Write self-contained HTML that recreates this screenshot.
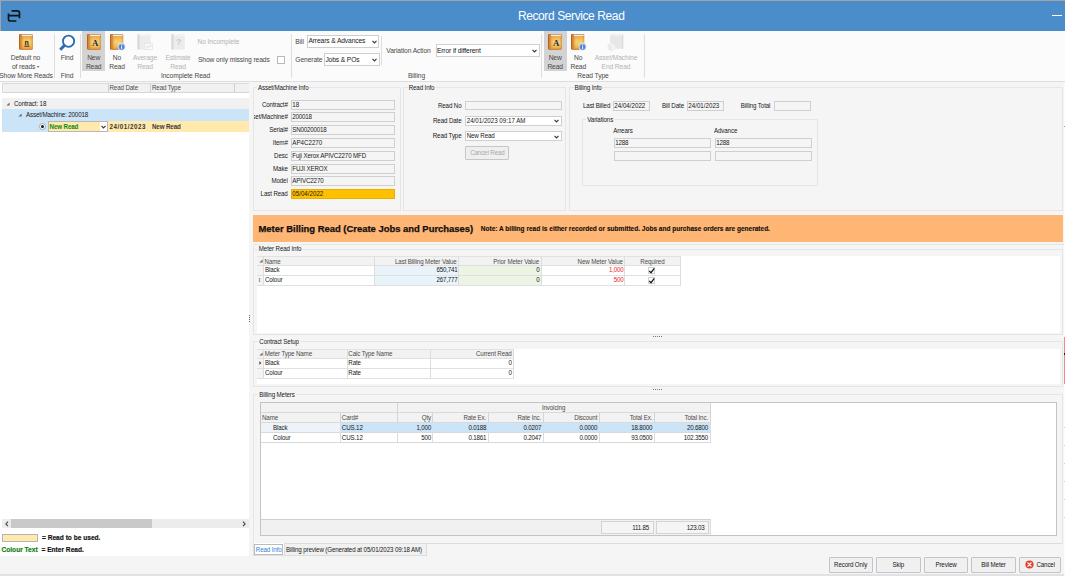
<!DOCTYPE html>
<html lang="en">
<head>
<meta charset="utf-8">
<title>Record Service Read</title>
<style>
*{box-sizing:border-box;margin:0;padding:0}
html,body{width:1065px;height:576px;overflow:hidden}
body{position:relative;letter-spacing:-0.12px;background:#f5f5f5;font-family:"Liberation Sans",sans-serif;font-size:6.2px;color:#181818}
.a{position:absolute}
.t{position:absolute;white-space:nowrap;line-height:8px;height:8px;font-size:6.2px;color:#181818}
.r{text-align:right}
.c{text-align:center}
.b{font-weight:bold}
.rb{letter-spacing:-0.1px;position:absolute;white-space:nowrap;line-height:8px;height:8px;font-size:6.7px;color:#484848}
.dis{color:#b4b4b4}
.sep{position:absolute;width:1px;background:#dedede}
.in{position:absolute;border:1px solid #cfcfcf;background:#f5f5f5;font-size:6.2px;line-height:7px;padding-left:0.3px;white-space:nowrap;overflow:hidden;color:#181818}
.dd{position:absolute;border:1px solid #cfcfcf;background:#fff;font-size:6.2px;line-height:8px;padding-left:0.4px;white-space:nowrap;overflow:hidden;color:#181818}
.grp{position:absolute;border:1px solid #e6e6e6}
.gl{position:absolute;white-space:nowrap;line-height:8px;height:8px;font-size:6.2px;color:#181818;background:#f5f5f5;padding:0 1px}
.n{letter-spacing:0}
.d{letter-spacing:-0.2px}
.t,.gt,.gl{transform:scaleY(1.12);transform-origin:50% 56%}
.sy{display:inline-block;transform:scaleY(1.12);transform-origin:50% 56%}
.gt{position:absolute;white-space:nowrap;line-height:8px;height:8px;font-size:6.2px;color:#181818}
.gh{color:#4a4a4a}
.btn{position:absolute;border-radius:1px;border:1px solid #c4c4c4;background:#f0f0f0;font-size:6.2px;line-height:13px;text-align:center;color:#181818;white-space:nowrap}
svg{position:absolute;overflow:visible}
</style>
</head>
<body>
<!-- window top edge + title bar -->
<div class="a" style="left:0;top:0;width:1065px;height:1px;background:#a3a3a3"></div>
<div class="a" style="left:0;top:1px;width:1065px;height:30px;background:#4b8dcb"></div>
<div class="a c" style="left:471.2px;top:7px;width:200px;height:18px;line-height:18px;font-size:12px;letter-spacing:-0.4px;color:#fff;white-space:nowrap">Record Service Read</div>
<svg style="left:0;top:0" width="30" height="30" viewBox="0 0 30 30"><path d="M11.6 10.9 H17.4 Q19.5 10.9 19.5 13 V18.3 M19.5 15.6 H9.2 M8.5 13.6 V18.9 Q8.5 21 10.6 21 H16.4" fill="none" stroke="#0f1612" stroke-width="1.7"/></svg>
<div class="a" style="left:0;top:0;width:1px;height:31px;background:#a3a3a3"></div>
<div class="a" style="left:1052px;top:15px;width:10px;height:1px;background:#fff"></div>

<!-- ribbon -->
<div class="a" id="ribbon" style="left:0;top:31px;width:1065px;height:51.3px;background:#fbfbfb;border-bottom:1px solid #dedede"></div>

<svg width="0" height="0" style="left:0;top:0"><defs>
<linearGradient id="sp" x1="0" y1="0" x2="1" y2="0"><stop offset="0" stop-color="#a9591a"/><stop offset="0.55" stop-color="#d88d3a"/><stop offset="1" stop-color="#c87a2c"/></linearGradient>
<linearGradient id="cv" x1="0" y1="0" x2="0" y2="1"><stop offset="0" stop-color="#e9a94a"/><stop offset="0.45" stop-color="#f8d272"/><stop offset="0.8" stop-color="#f2bc58"/><stop offset="1" stop-color="#dc933a"/></linearGradient>
<linearGradient id="cvs" x1="0" y1="0" x2="1" y2="0"><stop offset="0" stop-color="#d98c34" stop-opacity=".55"/><stop offset="0.25" stop-color="#d98c34" stop-opacity="0"/><stop offset="0.8" stop-color="#d98c34" stop-opacity="0"/><stop offset="1" stop-color="#d98c34" stop-opacity=".6"/></linearGradient>
<linearGradient id="bkd" x1="0" y1="0" x2="1" y2="0"><stop offset="0" stop-color="#cfcfcf"/><stop offset="0.2" stop-color="#e4e4e4"/><stop offset="0.6" stop-color="#f4f4f4"/><stop offset="1" stop-color="#dedede"/></linearGradient>
<radialGradient id="inf" cx="0.5" cy="0.55" r="0.55"><stop offset="0" stop-color="#2f62c4"/><stop offset="0.6" stop-color="#5a86d4"/><stop offset="1" stop-color="#b4c6e8"/></radialGradient>
</defs></svg>

<!-- group: Show More Reads -->
<svg style="left:18.5px;top:34px" width="14" height="16" viewBox="0 0 14 16"><rect x="0" y="0.1" width="13.7" height="15.6" rx="1.1" fill="#b96a22"/><rect x="2.3" y="0.6" width="10.9" height="1.5" fill="#f6f1e8"/><rect x="0.3" y="0.7" width="2.4" height="14.6" rx="0.6" fill="url(#sp)"/><rect x="2.6" y="2" width="10.9" height="13.3" fill="url(#cv)"/><rect x="2.6" y="2" width="10.9" height="13.3" fill="url(#cvs)"/><text x="7.7" y="10.8" text-anchor="middle" font-family="Liberation Sans,sans-serif" font-weight="bold" font-size="7" fill="#22170c">n</text><rect x="5.3" y="11.7" width="5.2" height="0.9" fill="#22170c"/></svg>
<div class="rb c" style="left:0.5px;top:54px;width:50px">Default no</div>
<div class="rb c" style="left:0.5px;top:62.6px;width:50px">of reads <span style="font-size:4px;vertical-align:0.6px">&#9662;</span></div>
<div class="rb c" style="left:-4px;top:71.5px;width:60px">Show More Reads</div>
<div class="sep" style="left:53.5px;top:34px;height:44px"></div>

<!-- group: Find -->
<svg style="left:58px;top:33px" width="18" height="19" viewBox="0 0 18 19"><circle cx="10.55" cy="8.2" r="5.6" fill="#fdfdfd" stroke="#2c6ab1" stroke-width="1.8"/><path d="M6.5 12.4 L2.2 16.7" stroke="#2c6ab1" stroke-width="2.9" stroke-linecap="butt"/></svg>
<div class="rb c" style="left:52px;top:54px;width:30px">Find</div>
<div class="rb c" style="left:52px;top:71.5px;width:30px">Find</div>
<div class="sep" style="left:80.0px;top:34px;height:44px"></div>

<!-- group: Incomplete Read -->
<div class="a" style="left:82.3px;top:31px;width:23px;height:39.5px;background:#d3d3d3"></div>
<svg style="left:87px;top:34px" width="14" height="16" viewBox="0 0 14 16"><rect x="0" y="0.1" width="13.7" height="15.6" rx="1.1" fill="#b96a22"/><rect x="2.3" y="0.6" width="10.9" height="1.5" fill="#f6f1e8"/><rect x="0.3" y="0.7" width="2.4" height="14.6" rx="0.6" fill="url(#sp)"/><rect x="2.6" y="2" width="10.9" height="13.3" fill="url(#cv)"/><rect x="2.6" y="2" width="10.9" height="13.3" fill="url(#cvs)"/><text x="8" y="12" text-anchor="middle" font-family="Liberation Serif,serif" font-weight="bold" font-size="8.8" fill="#1f2a55">A</text></svg>
<div class="rb c" style="left:78.7px;top:54px;width:30px">New</div>
<div class="rb c" style="left:78.7px;top:62.6px;width:30px">Read</div>
<svg style="left:110px;top:34px" width="16" height="17" viewBox="0 0 16 17"><rect x="0" y="0.1" width="13.2" height="15.6" rx="1.1" fill="#b96a22"/><rect x="2.3" y="0.6" width="10.4" height="1.5" fill="#f6f1e8"/><rect x="0.3" y="0.7" width="2.4" height="14.6" rx="0.6" fill="url(#sp)"/><rect x="2.6" y="2" width="10.4" height="13.3" fill="url(#cv)"/><rect x="2.6" y="2" width="10.4" height="13.3" fill="url(#cvs)"/><circle cx="11.6" cy="12.7" r="3.9" fill="#e4e9f2"/><circle cx="11.6" cy="12.7" r="3.3" fill="url(#inf)"/><rect x="11.05" y="12.2" width="1.1" height="2.6" fill="#fff"/><rect x="11.05" y="10.5" width="1.1" height="1.1" fill="#fff"/></svg>
<div class="rb c" style="left:102px;top:54px;width:30px">No</div>
<div class="rb c" style="left:102px;top:62.6px;width:30px">Read</div>
<svg style="left:137px;top:34px" width="16" height="17" viewBox="0 0 16 17"><rect x="0.4" y="0.3" width="13.2" height="15.2" rx="0.9" fill="#ececec"/><rect x="0.4" y="0.3" width="2.2" height="15.2" rx="0.6" fill="#d9d9d9"/><rect x="2.6" y="0.6" width="10.8" height="1.2" fill="#f7f7f7"/><rect x="7.4" y="9.2" width="8.2" height="6.4" rx="0.7" fill="#f8f8f8" stroke="#dedede" stroke-width="0.6"/><path d="M8.6 13.6 L10.4 12.2 L11.6 13 L14.4 11.2" fill="none" stroke="#d0d0d0" stroke-width="0.7"/></svg>
<div class="rb c dis" style="left:130px;top:54px;width:30px">Average</div>
<div class="rb c dis" style="left:130px;top:62.6px;width:30px">Read</div>
<svg style="left:171px;top:34px" width="16" height="17" viewBox="0 0 16 17"><rect x="0.4" y="0.3" width="13.4" height="15.2" rx="0.9" fill="#ececec"/><rect x="0.4" y="0.3" width="2.2" height="15.2" rx="0.6" fill="#d9d9d9"/><rect x="2.6" y="0.6" width="11" height="1.2" fill="#f7f7f7"/><text x="7.6" y="11.4" text-anchor="middle" font-family="Liberation Sans,sans-serif" font-weight="bold" font-size="9" fill="#cdcdcd">?</text></svg>
<div class="rb c dis" style="left:163px;top:54px;width:30px">Estimate</div>
<div class="rb c dis" style="left:163px;top:62.6px;width:30px">Read</div>
<div class="rb dis" style="left:197.5px;top:37.7px">No Incomplete</div>
<div class="rb" style="left:198px;top:55.5px">Show only missing reads</div>
<div class="a" style="left:277px;top:55.6px;width:8px;height:8px;border:1px solid #b9b9b9;background:#fff"></div>
<div class="rb c" style="left:145.5px;top:71.5px;width:80px">Incomplete Read</div>
<div class="sep" style="left:290.5px;top:34px;height:44px"></div>

<!-- group: Billing -->
<div class="rb" style="left:295.3px;top:37.5px">Bill</div>
<div class="dd" style="left:307px;top:35.4px;width:72px;height:13.1px;font-size:6.7px;line-height:10.8px"><span class="sy">Arrears &amp; Advances</span></div>
<svg style="left:371.5px;top:40.3px" width="5" height="4" viewBox="0 0 5 4"><path d="M0.5 0.8 L2.5 2.9 L4.5 0.8" fill="none" stroke="#333" stroke-width="1.1"/></svg>
<div class="rb" style="left:295.3px;top:55.5px">Generate</div>
<div class="dd" style="left:324px;top:53px;width:55.5px;height:12.7px;font-size:6.7px;line-height:11.2px"><span class="sy">Jobs &amp; POs</span></div>
<svg style="left:371.5px;top:58.2px" width="5" height="4" viewBox="0 0 5 4"><path d="M0.5 0.8 L2.5 2.9 L4.5 0.8" fill="none" stroke="#333" stroke-width="1.1"/></svg>
<div class="sep" style="left:381.0px;top:36px;height:29px"></div>
<div class="rb" style="left:386.3px;top:47.1px">Variation Action</div>
<div class="dd" style="left:435.5px;top:44px;width:104px;height:13.3px;font-size:6.7px;line-height:11.3px"><span class="sy">Error if different</span></div>
<svg style="left:531.5px;top:48.8px" width="5" height="4" viewBox="0 0 5 4"><path d="M0.5 0.8 L2.5 2.9 L4.5 0.8" fill="none" stroke="#333" stroke-width="1.1"/></svg>
<div class="rb c" style="left:386.5px;top:71.5px;width:60px">Billing</div>
<div class="sep" style="left:541.0px;top:34px;height:44px"></div>

<!-- group: Read Type -->
<div class="a" style="left:544px;top:31px;width:22.7px;height:39.5px;background:#d3d3d3"></div>
<svg style="left:548.3px;top:34px" width="14" height="16" viewBox="0 0 14 16"><rect x="0" y="0.1" width="13.7" height="15.6" rx="1.1" fill="#b96a22"/><rect x="2.3" y="0.6" width="10.9" height="1.5" fill="#f6f1e8"/><rect x="0.3" y="0.7" width="2.4" height="14.6" rx="0.6" fill="url(#sp)"/><rect x="2.6" y="2" width="10.9" height="13.3" fill="url(#cv)"/><rect x="2.6" y="2" width="10.9" height="13.3" fill="url(#cvs)"/><text x="8" y="12" text-anchor="middle" font-family="Liberation Serif,serif" font-weight="bold" font-size="8.8" fill="#1f2a55">A</text></svg>
<div class="rb c" style="left:540.2px;top:54px;width:30px">New</div>
<div class="rb c" style="left:540.2px;top:62.6px;width:30px">Read</div>
<svg style="left:571px;top:34px" width="16" height="17" viewBox="0 0 16 17"><rect x="0" y="0.1" width="13.2" height="15.6" rx="1.1" fill="#b96a22"/><rect x="2.3" y="0.6" width="10.4" height="1.5" fill="#f6f1e8"/><rect x="0.3" y="0.7" width="2.4" height="14.6" rx="0.6" fill="url(#sp)"/><rect x="2.6" y="2" width="10.4" height="13.3" fill="url(#cv)"/><rect x="2.6" y="2" width="10.4" height="13.3" fill="url(#cvs)"/><circle cx="11.6" cy="12.7" r="3.9" fill="#e4e9f2"/><circle cx="11.6" cy="12.7" r="3.3" fill="url(#inf)"/><rect x="11.05" y="12.2" width="1.1" height="2.6" fill="#fff"/><rect x="11.05" y="10.5" width="1.1" height="1.1" fill="#fff"/></svg>
<div class="rb c" style="left:563.3px;top:54px;width:30px">No</div>
<div class="rb c" style="left:563.3px;top:62.6px;width:30px">Read</div>
<svg style="left:608px;top:34px" width="16" height="17" viewBox="0 0 16 17"><rect x="2.1" y="0.2" width="13.1" height="14.6" rx="0.8" fill="#e7e7e7"/><rect x="2.6" y="0.6" width="12" height="1.2" fill="#f3f3f3"/><rect x="14" y="0.6" width="1.2" height="14" fill="#dcdcdc"/><path d="M0 10.6 L3.6 9.1 L7.2 10.4 L7.2 14.9 L3.7 16.6 L0 15.1 Z" fill="#f6f6f6" stroke="#e2e2e2" stroke-width="0.5"/><path d="M0 10.6 L3.7 12 L7.2 10.4 M3.7 12 V16.6" fill="none" stroke="#e0e0e0" stroke-width="0.5"/><path d="M0 10.6 L3.7 12 V16.6 L0 15.1 Z" fill="#ebebeb"/></svg>
<div class="rb c dis" style="left:586px;top:54px;width:60px">Asset/Machine</div>
<div class="rb c dis" style="left:586px;top:62.6px;width:60px">End Read</div>
<div class="rb c" style="left:563px;top:71.5px;width:60px">Read Type</div>
<div class="sep" style="left:644.0px;top:34px;height:44px"></div>

<!-- left panel -->
<div class="a" id="leftpanel" style="left:0;top:83px;width:249px;height:473px;background:#fff"></div>


<!-- left grid header -->
<div class="a" style="left:2px;top:83px;width:247px;height:9.5px;background:#f1f1f1;border-top:1px solid #dadada;border-bottom:1px solid #d6d6d6"></div>
<div class="a" style="left:2px;top:83px;width:1px;height:9.5px;background:#dddddd"></div>
<div class="a" style="left:107.5px;top:84px;width:1px;height:8px;background:#d0d0d0"></div>
<div class="a" style="left:150px;top:84px;width:1px;height:8px;background:#d0d0d0"></div>
<div class="a" style="left:233.5px;top:84px;width:1px;height:8px;background:#d0d0d0"></div>
<div class="t" style="left:109.5px;top:84px;color:#4a4a4a">Read Date</div>
<div class="t" style="left:152px;top:84px;color:#4a4a4a">Read Type</div>
<!-- tree rows -->
<div class="a" style="left:2px;top:98px;width:247px;height:11px;background:#f1f1f1"></div>
<svg style="left:5.6px;top:101.7px" width="4" height="4" viewBox="0 0 4 4"><path d="M3.6 0.4 V3.6 H0.4 Z" fill="#6a6a6a"/></svg>
<div class="t" style="left:14px;top:99.5px">Contract: 18</div>
<div class="a" style="left:2px;top:109px;width:247px;height:12px;background:#cce4f7"></div>
<svg style="left:17.6px;top:113.4px" width="4" height="4" viewBox="0 0 4 4"><path d="M3.6 0.4 V3.6 H0.4 Z" fill="#6a6a6a"/></svg>
<div class="t" style="left:26px;top:111.2px">Asset/Machine: 200018</div>
<div class="a" style="left:2px;top:121px;width:46px;height:11px;background:#cce4f7"></div>
<div class="a" style="left:48px;top:121px;width:201px;height:11px;background:#ffe9ad"></div>
<div class="a" style="left:38.8px;top:122.8px;width:7px;height:7px;border-radius:50%;border:0.8px solid #a5a5a5;background:#fff"></div>
<div class="a" style="left:40.5px;top:124.5px;width:3.6px;height:3.6px;border-radius:50%;background:#151515"></div>
<div class="a" style="left:48px;top:120.8px;width:60.3px;height:11.6px;border:1px solid #b8b8b8;background:#ffe9ad"></div>
<div class="a" style="left:99.5px;top:121.8px;width:7.8px;height:9.6px;background:#fff"></div>
<svg style="left:101.3px;top:125px" width="5" height="4" viewBox="0 0 5 4"><path d="M0.5 0.8 L2.5 2.9 L4.5 0.8" fill="none" stroke="#333" stroke-width="1.1"/></svg>
<div class="t b" style="left:49.6px;top:122.7px;color:#0c8a0c">New Read</div>
<div class="t b" id="trd" style="left:109.5px;top:122.7px;color:#333;letter-spacing:0.55px">24/01/2023</div>
<div class="t b" style="left:152px;top:122.7px;color:#3a3a3a">New Read</div>
<!-- scrollbar -->
<div class="a" style="left:2px;top:519px;width:247px;height:9.3px;background:#ececec"></div>
<div class="a" style="left:11px;top:519px;width:141px;height:9.3px;background:#c9c9c9"></div>
<svg style="left:4.5px;top:521px" width="4" height="6" viewBox="0 0 4 6"><path d="M3 0.6 L0.9 2.9 L3 5.2" fill="none" stroke="#444" stroke-width="1.1"/></svg>
<svg style="left:242px;top:521px" width="4" height="6" viewBox="0 0 4 6"><path d="M1 0.6 L3.1 2.9 L1 5.2" fill="none" stroke="#444" stroke-width="1.1"/></svg>
<!-- legend -->
<div class="a" style="left:1.5px;top:534px;width:36.5px;height:7.7px;background:#ffe9ad;border:1px solid #b5b5b5"></div>
<div class="t b" id="lg1" style="left:42px;top:533.6px;color:#111;font-size:6.6px;letter-spacing:0;-webkit-text-stroke:0.15px #111">= Read to be used.</div>
<div class="t b" id="lg2" style="left:1.5px;top:546px;color:#0a7d0a;font-size:6.6px;letter-spacing:0;-webkit-text-stroke:0.15px #0a7d0a">Colour Text</div>
<div class="t b" id="lg3" style="left:41.5px;top:546px;color:#111;font-size:6.6px;letter-spacing:0;-webkit-text-stroke:0.15px #111">= Enter Read.</div>
<!-- splitter dots -->
<div class="a" style="left:249.3px;top:314.5px;width:1px;height:1px;background:#666;box-shadow:0 2px 0 #666,0 4px 0 #666,0 6px 0 #666"></div>

<!-- Asset/Machine Info -->
<div class="grp" style="left:252.5px;top:86.8px;width:148px;height:123.9px"></div>
<div class="gl" style="left:257px;top:84px">Asset/Machine Info</div>
<div class="a" style="left:253.5px;top:96px;width:35.5px;height:110px;overflow:hidden">
<div class="t r" style="right:1.3px;top:4.70px">Contract#</div>
<div class="t r" style="right:1.3px;top:17.48px">Asset/Machine#</div>
<div class="t r" style="right:1.3px;top:30.26px">Serial#</div>
<div class="t r" style="right:1.3px;top:43.04px">Item#</div>
<div class="t r" style="right:1.3px;top:55.82px">Desc</div>
<div class="t r" style="right:1.3px;top:68.60px">Make</div>
<div class="t r" style="right:1.3px;top:81.38px">Model</div>
<div class="t r" style="right:1.3px;top:94.16px">Last Read</div>
</div>
<div class="in n" style="left:291px;top:99.60px;width:104.3px;height:10px"><span class="sy">18</span></div>
<div class="in d" style="left:291px;top:112.38px;width:104.3px;height:10px"><span class="sy">200018</span></div>
<div class="in d" style="left:291px;top:125.16px;width:104.3px;height:10px"><span class="sy">SN00200018</span></div>
<div class="in n" style="left:291px;top:137.94px;width:104.3px;height:10px"><span class="sy">AP4C2270</span></div>
<div class="in" style="left:291px;top:150.72px;width:104.3px;height:10px"><span class="sy">Fuji Xerox APIVC2270 MFD</span></div>
<div class="in" style="left:291px;top:163.50px;width:104.3px;height:10px"><span class="sy">FUJI XEROX</span></div>
<div class="in" style="left:291px;top:176.28px;width:104.3px;height:10px"><span class="sy">APIVC2270</span></div>
<div class="in n" style="left:291px;top:189.06px;width:104.3px;height:10px;background:#ffc000;border-color:#e9b000"><span class="sy">05/04/2022</span></div>

<!-- Read Info -->
<div class="grp" style="left:402.8px;top:86.8px;width:163.2px;height:123.9px"></div>
<div class="gl" style="left:407.7px;top:84px">Read Info</div>
<div class="t r" style="left:411px;width:50.5px;top:101.7px">Read No</div>
<div class="in" style="left:465.3px;top:100.5px;width:96.5px;height:9.8px"></div>
<div class="t r" style="left:411px;width:50.5px;top:116.8px">Read Date</div>
<div class="dd n" style="left:465.3px;top:115.7px;width:96.5px;height:10.5px;line-height:8.5px"><span class="sy">24/01/2023 09:17 AM</span></div>
<svg style="left:554.3px;top:119.2px" width="5" height="4" viewBox="0 0 5 4"><path d="M0.5 0.8 L2.5 2.9 L4.5 0.8" fill="none" stroke="#333" stroke-width="1.1"/></svg>
<div class="t r" style="left:411px;width:50.5px;top:132.2px">Read Type</div>
<div class="dd" style="left:465.3px;top:130.7px;width:96.5px;height:10.8px;line-height:8.5px"><span class="sy">New Read</span></div>
<svg style="left:554.3px;top:134.5px" width="5" height="4" viewBox="0 0 5 4"><path d="M0.5 0.8 L2.5 2.9 L4.5 0.8" fill="none" stroke="#333" stroke-width="1.1"/></svg>
<div class="btn" style="left:465.3px;top:145.6px;width:44.2px;height:14.6px;line-height:12.6px;color:#a8a8a8;border-color:#c6c6c6;background:#efefef"><span class="sy">Cancel Read</span></div>

<!-- Billing Info -->
<div class="grp" style="left:569.3px;top:86.8px;width:493.4px;height:123.9px"></div>
<div class="gl" style="left:573.5px;top:84px">Billing Info</div>
<div class="t" style="left:583px;top:102px">Last Billed</div>
<div class="in n" style="left:613px;top:100.5px;width:36.7px;height:10.2px;line-height:8.2px"><span class="sy">24/04/2022</span></div>
<div class="t" style="left:662px;top:102px">Bill Date</div>
<div class="in n" style="left:687px;top:100.5px;width:37px;height:10.2px;line-height:8.2px"><span class="sy">24/01/2023</span></div>
<div class="t" style="left:740.7px;top:102px">Billing Total</div>
<div class="in" style="left:774px;top:100.5px;width:36.7px;height:10.2px"></div>
<div class="grp" style="left:581.7px;top:118.8px;width:236px;height:67.2px"></div>
<div class="gl" style="left:586.3px;top:115.5px">Variations</div>
<div class="t" style="left:613.2px;top:127px">Arrears</div>
<div class="t" style="left:714px;top:127px">Advance</div>
<div class="in d" style="left:614px;top:138px;width:96.7px;height:10.2px;line-height:8.2px"><span class="sy">1288</span></div>
<div class="in d" style="left:715px;top:138px;width:96.7px;height:10.2px;line-height:8.2px"><span class="sy">1288</span></div>
<div class="in" style="left:614px;top:151px;width:96.7px;height:10.2px"></div>
<div class="in" style="left:715px;top:151px;width:96.7px;height:10.2px"></div>

<!-- banner -->
<div class="a" style="left:252.5px;top:215.2px;width:810.2px;height:26.8px;background:#ffb574"></div>
<div class="a" style="left:252.5px;top:243.6px;width:811px;height:1px;background:#e4e4e4"></div>
<div class="t b" id="bhead" style="left:258.5px;top:222.4px;height:13px;line-height:13px;font-size:9.44px;letter-spacing:0;color:#101010;transform:none;-webkit-text-stroke:0.25px #101010;transform-origin:0 50%;">Meter Billing Read (Create Jobs and Purchases)</div>
<div class="t b" id="bnote" style="left:480.8px;top:225px;font-size:6.54px;letter-spacing:0;color:#101010;transform:none;-webkit-text-stroke:0.12px #101010">Note: A billing read is either recorded or submitted. Jobs and purchase orders are generated.</div>

<!-- Meter Read Info -->
<div class="a" style="left:252.5px;top:244px;width:1px;height:5px;background:#e9e9e9"></div>
<div class="grp" style="left:252.5px;top:248.5px;width:810.2px;height:86px"></div>
<div class="gl" style="left:257.8px;top:245.2px">Meter Read Info</div>
<div class="a" style="left:257.0px;top:256.0px;width:802.8px;height:76.6px;background:#fff"></div>
<div class="a" style="left:257.0px;top:256.1px;width:423.0px;height:9.4px;background:#f2f2f2"></div>
<div class="a" style="left:257.0px;top:265.5px;width:6.6px;height:20.0px;background:#f4f4f4"></div>
<div class="a" style="left:374.7px;top:265.5px;width:84.0px;height:20.0px;background:#e8f3fa"></div>
<div class="a" style="left:458.7px;top:265.5px;width:82.3px;height:20.0px;background:#ecf5e3"></div>
<div class="a" style="left:257.0px;top:255.6px;width:423.5px;height:1px;background:#e2e2e2"></div>
<div class="a" style="left:257.0px;top:265.0px;width:423.5px;height:1px;background:#e0e0e0"></div>
<div class="a" style="left:257.0px;top:274.9px;width:423.5px;height:1px;background:#e0e0e0"></div>
<div class="a" style="left:257.0px;top:285.0px;width:423.5px;height:1px;background:#e0e0e0"></div>
<div class="a" style="left:263.1px;top:256.1px;width:1px;height:29.4px;background:#dddddd"></div>
<div class="a" style="left:374.2px;top:256.1px;width:1px;height:29.4px;background:#dddddd"></div>
<div class="a" style="left:458.2px;top:256.1px;width:1px;height:29.4px;background:#dddddd"></div>
<div class="a" style="left:540.5px;top:256.1px;width:1px;height:29.4px;background:#dddddd"></div>
<div class="a" style="left:624.3px;top:256.1px;width:1px;height:29.4px;background:#dddddd"></div>
<div class="a" style="left:679.5px;top:256.1px;width:1px;height:29.4px;background:#dddddd"></div>
<svg style="left:259.4px;top:258.9px" width="4" height="4" viewBox="0 0 4 4"><path d="M3.6 0.4 V3.6 H0.4 Z" fill="#6a6a6a"/></svg>
<div class="gt gh" style="left:264.6px;top:257.6px">Name</div>
<div class="gt gh" style="left:374.7px;width:82.0px;text-align:right;top:257.6px">Last Billing Meter Value</div>
<div class="gt gh" style="left:458.7px;width:80.3px;text-align:right;top:257.6px">Prior Meter Value</div>
<div class="gt gh" style="left:541.0px;width:81.8px;text-align:right;top:257.6px">New Meter Value</div>
<div class="gt gh" style="left:624.8px;width:55.2px;text-align:center;top:257.6px">Required</div>
<div class="gt" style="left:264.9px;top:266.4px">Black</div>
<div class="gt d" style="left:374.7px;width:82.7px;text-align:right;top:266.4px">650,741</div>
<div class="gt n" style="left:458.7px;width:81.0px;text-align:right;top:266.4px">0</div>
<div class="gt d" style="left:541.0px;width:82.5px;text-align:right;top:266.4px;color:#e8252c">1,000</div>
<div class="a" style="left:648.3px;top:266.7px;width:7.2px;height:7.2px;border:1px solid #d2d2d2;background:#fff"></div><svg style="left:648.3px;top:266.7px" width="7.2" height="7.2" viewBox="0 0 7.2 7.2"><path d="M1.2 3.9 L3 5.7 L6.3 1.3" fill="none" stroke="#161616" stroke-width="1.25"/></svg>
<div class="gt" style="left:264.9px;top:276.4px">Colour</div>
<div class="gt d" style="left:374.7px;width:82.7px;text-align:right;top:276.4px">267,777</div>
<div class="gt n" style="left:458.7px;width:81.0px;text-align:right;top:276.4px">0</div>
<div class="gt d" style="left:541.0px;width:82.5px;text-align:right;top:276.4px;color:#e8252c">500</div>
<div class="a" style="left:648.3px;top:276.7px;width:7.2px;height:7.2px;border:1px solid #d2d2d2;background:#fff"></div><svg style="left:648.3px;top:276.7px" width="7.2" height="7.2" viewBox="0 0 7.2 7.2"><path d="M1.2 3.9 L3 5.7 L6.3 1.3" fill="none" stroke="#161616" stroke-width="1.25"/></svg>
<div class="gt" style="left:258.6px;top:276.3px;font-size:6px;color:#555;font-family:'Liberation Serif',serif">I</div>
<div class="a" style="left:653px;top:336.2px;width:1px;height:1px;background:#777;box-shadow:2px 0 0 #777,4px 0 0 #777,6px 0 0 #777,8px 0 0 #777"></div>

<!-- Contract Setup -->
<div class="grp" style="left:252.5px;top:340.8px;width:810.2px;height:46.7px"></div>
<div class="gl" style="left:258.3px;top:337.8px">Contract Setup</div>
<div class="a" style="left:257.0px;top:348.8px;width:802.8px;height:35.5px;background:#fff"></div>
<div class="a" style="left:257.0px;top:349.0px;width:256.3px;height:9.5px;background:#f2f2f2"></div>
<div class="a" style="left:257.0px;top:358.5px;width:6.7px;height:19.5px;background:#f4f4f4"></div>
<div class="a" style="left:257.0px;top:348.5px;width:256.8px;height:1px;background:#e2e2e2"></div>
<div class="a" style="left:257.0px;top:358.0px;width:256.8px;height:1px;background:#e0e0e0"></div>
<div class="a" style="left:257.0px;top:367.6px;width:256.8px;height:1px;background:#e0e0e0"></div>
<div class="a" style="left:257.0px;top:377.5px;width:256.8px;height:1px;background:#e0e0e0"></div>
<div class="a" style="left:263.2px;top:349.0px;width:1px;height:29.0px;background:#dddddd"></div>
<div class="a" style="left:346.5px;top:349.0px;width:1px;height:29.0px;background:#dddddd"></div>
<div class="a" style="left:430.0px;top:349.0px;width:1px;height:29.0px;background:#dddddd"></div>
<div class="a" style="left:512.8px;top:349.0px;width:1px;height:29.0px;background:#dddddd"></div>
<svg style="left:259.4px;top:351.6px" width="4" height="4" viewBox="0 0 4 4"><path d="M3.6 0.4 V3.6 H0.4 Z" fill="#6a6a6a"/></svg>
<div class="gt gh" style="left:264.7px;top:349.8px">Meter Type Name</div>
<div class="gt gh" style="left:348.3px;top:349.8px">Calc Type Name</div>
<div class="gt gh" style="left:430.5px;width:81.2px;text-align:right;top:349.8px">Current Read</div>
<svg style="left:259.4px;top:361.3px" width="3" height="4" viewBox="0 0 3 4"><path d="M0.4 0.3 L2.4 2 L0.4 3.7 Z" fill="#333"/></svg>
<div class="gt" style="left:265.0px;top:359.2px">Black</div>
<div class="gt" style="left:348.3px;top:359.2px">Rate</div>
<div class="gt n" style="left:430.5px;width:81.5px;text-align:right;top:359.2px">0</div>
<div class="gt" style="left:265.0px;top:369.0px">Colour</div>
<div class="gt" style="left:348.3px;top:369.0px">Rate</div>
<div class="gt n" style="left:430.5px;width:81.5px;text-align:right;top:369.0px">0</div>
<div class="a" style="left:653px;top:389.0px;width:1px;height:1px;background:#777;box-shadow:2px 0 0 #777,4px 0 0 #777,6px 0 0 #777,8px 0 0 #777"></div>

<!-- Billing Meters -->
<div class="grp" style="left:252.5px;top:394px;width:810.2px;height:150px;border-bottom-color:#dcdcdc"></div>
<div class="gl" style="left:258.3px;top:390.5px">Billing Meters</div>
<div class="a" style="left:260px;top:401.8px;width:797px;height:134.4px;background:#fff;border:1px solid #c4c4c4"></div>
<div class="a" style="left:261.0px;top:402.8px;width:449.0px;height:19.5px;background:#f2f2f2"></div>
<div class="a" style="left:261.0px;top:422.3px;width:449.0px;height:10.1px;background:#cce4f7"></div>
<div class="a" style="left:261.0px;top:422.3px;width:79.5px;height:10.1px;background:#eef3f9"></div>
<div class="a" style="left:340px;top:422.3px;width:1px;height:10.1px;background:#d6dde4"></div>
<div class="a" style="left:261.0px;top:411.9px;width:449.5px;height:1px;background:#d9d9d9"></div>
<div class="a" style="left:261.0px;top:421.8px;width:449.5px;height:1px;background:#d9d9d9"></div>
<div class="a" style="left:261.0px;top:431.9px;width:449.5px;height:1px;background:#d9d9d9"></div>
<div class="a" style="left:261.0px;top:441.8px;width:449.5px;height:1px;background:#d9d9d9"></div>
<div class="a" style="left:396.7px;top:402.8px;width:1px;height:9.6px;background:#d4d4d4"></div>
<div class="a" style="left:709.5px;top:402.8px;width:1px;height:9.6px;background:#d4d4d4"></div>
<div class="a" style="left:340.0px;top:412.4px;width:1px;height:9.9px;background:#d4d4d4"></div>
<div class="a" style="left:340.0px;top:432.4px;width:1px;height:9.9px;background:#dcdcdc"></div>
<div class="a" style="left:396.7px;top:412.4px;width:1px;height:9.9px;background:#d4d4d4"></div>
<div class="a" style="left:396.7px;top:432.4px;width:1px;height:9.9px;background:#dcdcdc"></div>
<div class="a" style="left:431.8px;top:412.4px;width:1px;height:9.9px;background:#d4d4d4"></div>
<div class="a" style="left:431.8px;top:432.4px;width:1px;height:9.9px;background:#dcdcdc"></div>
<div class="a" style="left:487.7px;top:412.4px;width:1px;height:9.9px;background:#d4d4d4"></div>
<div class="a" style="left:487.7px;top:432.4px;width:1px;height:9.9px;background:#dcdcdc"></div>
<div class="a" style="left:542.7px;top:412.4px;width:1px;height:9.9px;background:#d4d4d4"></div>
<div class="a" style="left:542.7px;top:432.4px;width:1px;height:9.9px;background:#dcdcdc"></div>
<div class="a" style="left:598.8px;top:412.4px;width:1px;height:9.9px;background:#d4d4d4"></div>
<div class="a" style="left:598.8px;top:432.4px;width:1px;height:9.9px;background:#dcdcdc"></div>
<div class="a" style="left:653.8px;top:412.4px;width:1px;height:9.9px;background:#d4d4d4"></div>
<div class="a" style="left:653.8px;top:432.4px;width:1px;height:9.9px;background:#dcdcdc"></div>
<div class="a" style="left:709.5px;top:412.4px;width:1px;height:9.9px;background:#d4d4d4"></div>
<div class="a" style="left:709.5px;top:432.4px;width:1px;height:9.9px;background:#dcdcdc"></div>
<div class="a" style="left:709.5px;top:422.3px;width:1px;height:10.1px;background:#dcdcdc"></div>
<div class="gt gh" style="left:397.2px;width:312.8px;text-align:center;top:403.6px">Invoicing</div>
<div class="gt gh" style="left:262.0px;top:413.5px">Name</div>
<div class="gt gh" style="left:341.8px;top:413.5px">Card#</div>
<div class="gt gh" style="left:397.2px;width:33.9px;text-align:right;top:413.5px">Qty</div>
<div class="gt gh" style="left:432.3px;width:53.9px;text-align:right;top:413.5px">Rate Ex.</div>
<div class="gt gh" style="left:488.2px;width:53.0px;text-align:right;top:413.5px">Rate Inc.</div>
<div class="gt gh" style="left:543.2px;width:54.1px;text-align:right;top:413.5px">Discount</div>
<div class="gt gh" style="left:599.3px;width:53.0px;text-align:right;top:413.5px">Total Ex.</div>
<div class="gt gh" style="left:654.3px;width:53.7px;text-align:right;top:413.5px">Total Inc.</div>
<div class="gt" style="left:273.0px;top:423.5px">Black</div>
<div class="gt" style="left:341.8px;top:423.5px">CUS.12</div>
<div class="gt d" style="left:397.2px;width:33.9px;text-align:right;top:423.5px">1,000</div>
<div class="gt d" style="left:432.3px;width:53.9px;text-align:right;top:423.5px">0.0188</div>
<div class="gt d" style="left:488.2px;width:53.0px;text-align:right;top:423.5px">0.0207</div>
<div class="gt d" style="left:543.2px;width:54.1px;text-align:right;top:423.5px">0.0000</div>
<div class="gt d" style="left:599.3px;width:53.0px;text-align:right;top:423.5px">18.8000</div>
<div class="gt d" style="left:654.3px;width:53.7px;text-align:right;top:423.5px">20.6800</div>
<div class="gt" style="left:273.0px;top:433.5px">Colour</div>
<div class="gt" style="left:341.8px;top:433.5px">CUS.12</div>
<div class="gt d" style="left:397.2px;width:33.9px;text-align:right;top:433.5px">500</div>
<div class="gt d" style="left:432.3px;width:53.9px;text-align:right;top:433.5px">0.1861</div>
<div class="gt d" style="left:488.2px;width:53.0px;text-align:right;top:433.5px">0.2047</div>
<div class="gt d" style="left:543.2px;width:54.1px;text-align:right;top:433.5px">0.0000</div>
<div class="gt d" style="left:599.3px;width:53.0px;text-align:right;top:433.5px">93.0500</div>
<div class="gt d" style="left:654.3px;width:53.7px;text-align:right;top:433.5px">102.3550</div>
<div class="a" style="left:261.0px;top:518.8px;width:449.0px;height:16.4px;background:#f1f1f1"></div>
<div class="a" style="left:261.0px;top:518.5px;width:449.5px;height:1px;background:#cfcfcf"></div>
<div class="a" style="left:709.5px;top:519.0px;width:1px;height:16.2px;background:#dcdcdc"></div>
<div class="in r d" style="left:600.7px;top:520.8px;width:53px;height:13.2px;line-height:11.2px;padding-right:3.6px;background:#f5f5f5;border-color:#d4d4d4"><span class="sy">111.85</span></div>
<div class="in r d" style="left:656.2px;top:520.8px;width:53px;height:13.2px;line-height:11.2px;padding-right:3.6px;background:#f5f5f5;border-color:#d4d4d4"><span class="sy">123.03</span></div>

<!-- tabs -->
<div class="a" style="left:252.9px;top:543.3px;width:31.7px;height:13px;background:#fff;border:1px solid #e0e0e0;border-top:0"></div>
<div class="a" style="left:254px;top:544.2px;width:29px;height:10.6px;border:1px solid #b9bcc2"></div>
<div class="t" style="left:255.8px;top:545.6px;color:#2c7fd6">Read Info</div>
<div class="a" style="left:284.3px;top:543.8px;width:142.8px;height:12px;background:#f1f1f1;border:1px solid #dcdcdc;border-top:0"></div>
<div class="t" style="left:286px;top:545.6px">Billing preview (Generated at 05/01/2023 09:18 AM)</div>

<!-- buttons -->
<div class="btn" style="left:828.5px;top:557px;width:44.2px;height:15.8px"><span class="sy">Record Only</span></div>
<div class="btn" style="left:876px;top:557px;width:44.5px;height:15.8px"><span class="sy">Skip</span></div>
<div class="btn" style="left:923.7px;top:557px;width:44.6px;height:15.8px"><span class="sy">Preview</span></div>
<div class="btn" style="left:971.4px;top:557px;width:44.2px;height:15.8px"><span class="sy">Bill Meter</span></div>
<div class="btn" style="left:1018.7px;top:557px;width:42.5px;height:15.8px;padding-left:11.5px"><span class="sy">Cancel</span></div>
<svg style="left:1025px;top:559.8px" width="9" height="9" viewBox="0 0 9 9"><circle cx="4.5" cy="4.5" r="4.1" fill="#e3402c"/><path d="M2.9 2.9 L6.1 6.1 M6.1 2.9 L2.9 6.1" stroke="#fff" stroke-width="1.3" stroke-linecap="round"/></svg>

<!-- right edge artifacts -->
<div class="a" style="left:1063.5px;top:83px;width:1.5px;height:491px;background:#fcfcfc"></div>
<div class="a" style="left:1063.5px;top:427px;width:1.5px;height:1px;background:#cfcfcf;box-shadow:0 18px 0 #cfcfcf,0 36px 0 #cfcfcf,0 54px 0 #cfcfcf,0 72px 0 #cfcfcf,0 90px 0 #cfcfcf"></div>
<div class="a" style="left:1064px;top:125.5px;width:1px;height:1px;background:#9a9a9a"></div>
<div class="a" style="left:1064px;top:336.7px;width:1px;height:47.5px;background:#f08a8a"></div>
<div class="a" style="left:1063.5px;top:353px;width:1.5px;height:2px;background:#222"></div>
<!-- bottom strip -->
<div class="a" style="left:0;top:574.3px;width:1064px;height:1.7px;background:#e1e1e6"></div>
</body>
</html>
